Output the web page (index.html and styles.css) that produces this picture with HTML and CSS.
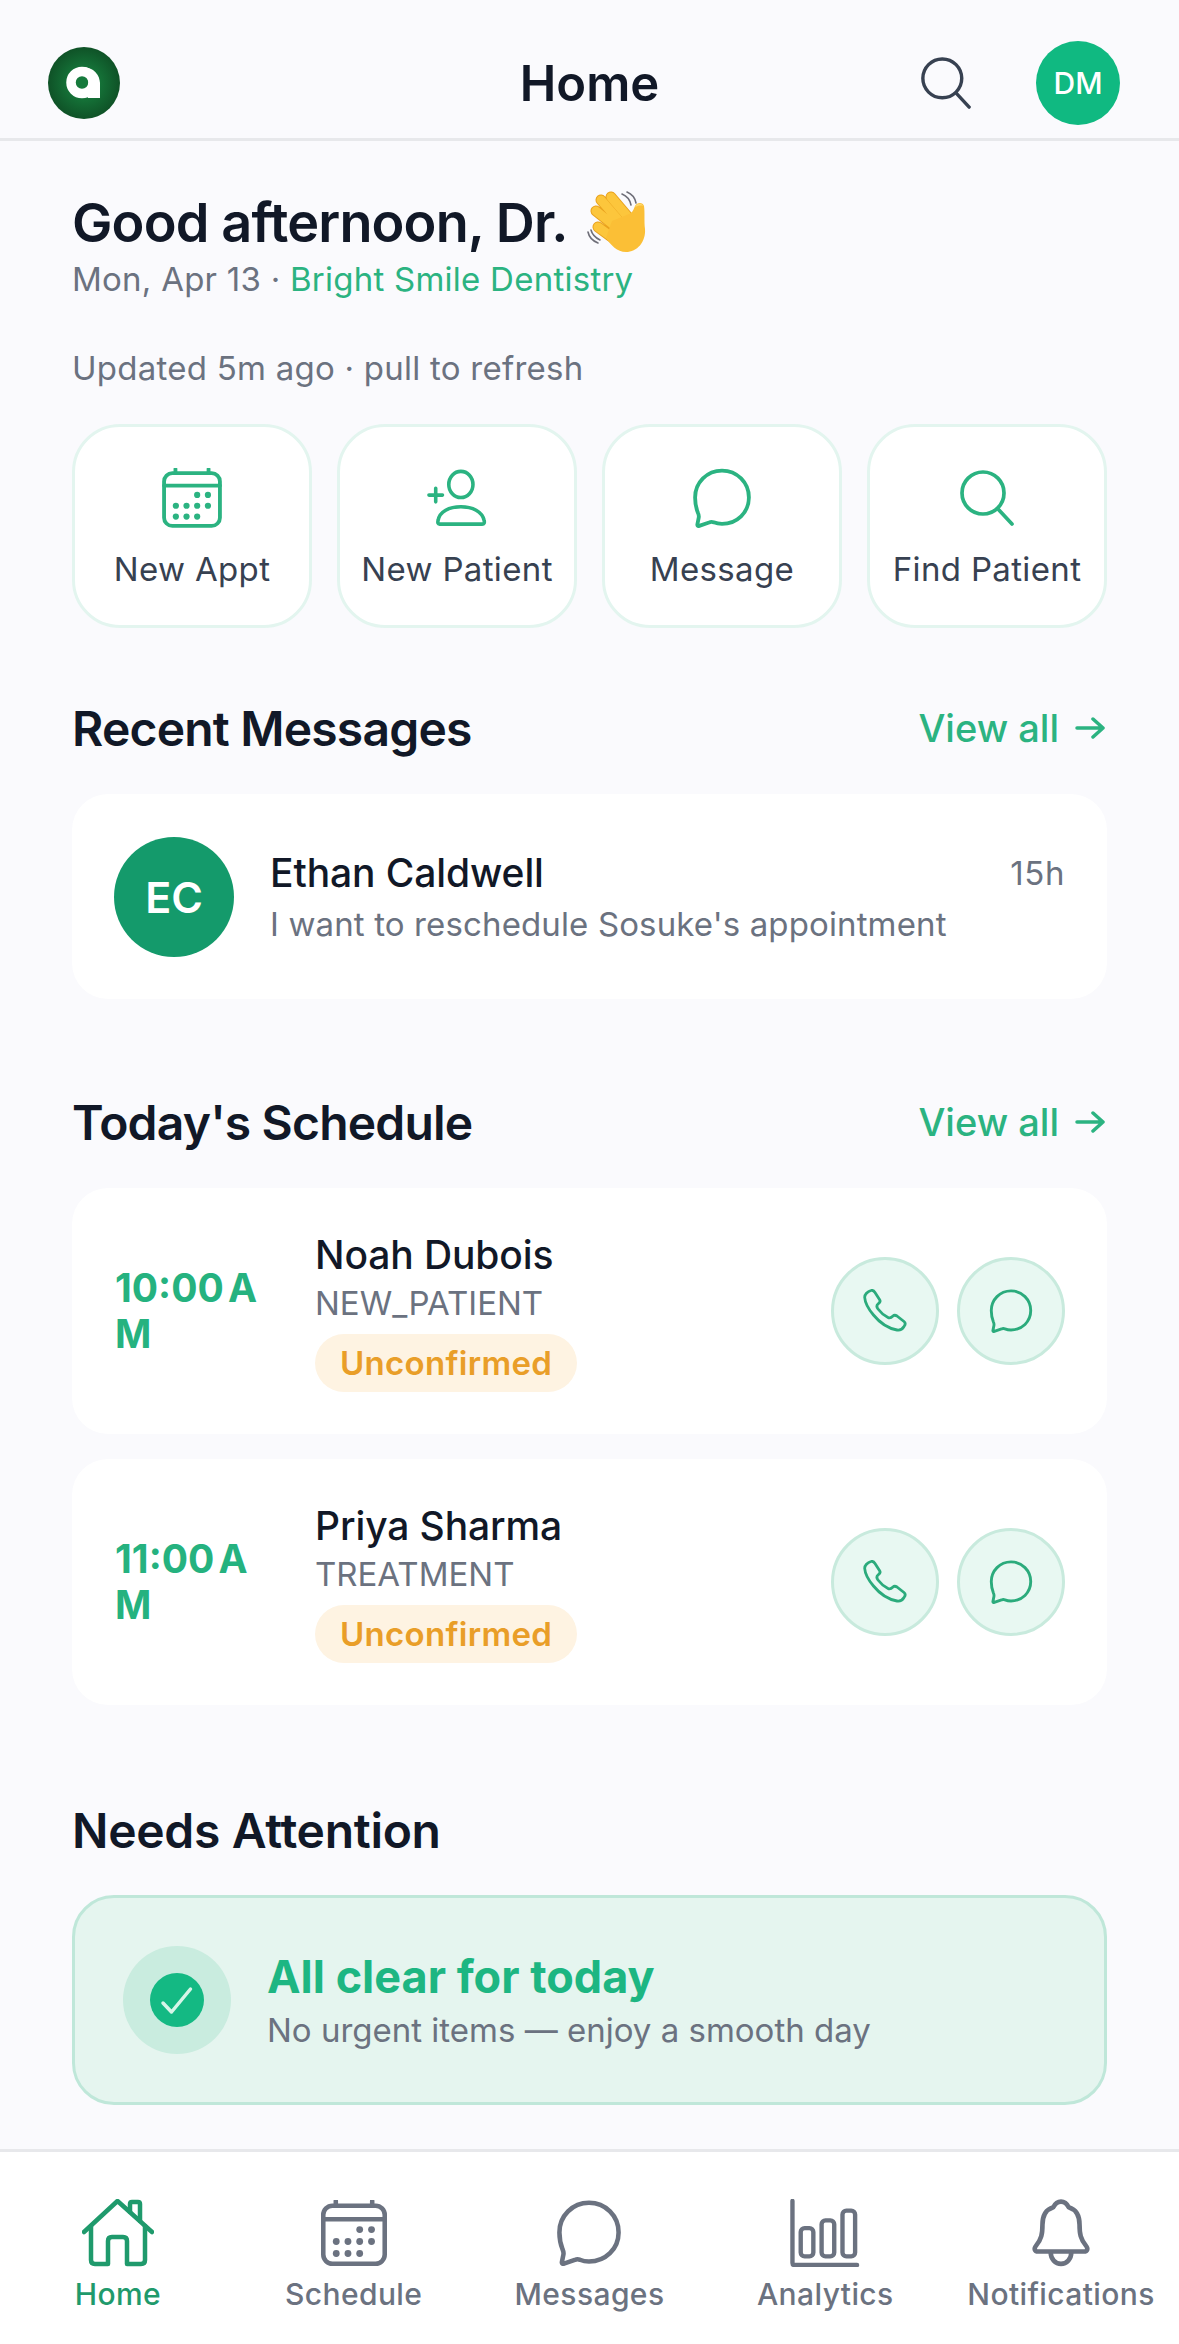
FILE: index.html
```html
<!DOCTYPE html>
<html lang="en">
<head>
    <meta charset="UTF-8">
    <meta name="viewport" content="width=device-width, initial-scale=1.0">
    <title>Home</title>
    <link rel="stylesheet" href="styles.css">
</head>
<body>
    <svg class="icon-defs" aria-hidden="true">
        <symbol id="i-calendar" viewBox="0 0 58 58">
            <rect x="2" y="5" width="54" height="51" rx="8"/>
            <path d="M2 17H56M13 1V5M45 1V5"/>
            <g class="dots">
                <circle cx="34" cy="26" r="3"/><circle cx="44.4" cy="26" r="3"/>
                <circle cx="13.4" cy="36.5" r="3"/><circle cx="23.7" cy="36.5" r="3"/><circle cx="34" cy="36.5" r="3"/><circle cx="44.4" cy="36.5" r="3"/>
                <circle cx="13.4" cy="47" r="3"/><circle cx="23.7" cy="47" r="3"/><circle cx="34" cy="47" r="3"/>
            </g>
        </symbol>
        <symbol id="i-chat" viewBox="0 0 58 58">
            <path d="M29 2.500C43.500 2.500 55 14 55 28.500S43.500 54 29 54C26 54 23.500 53.500 21 52.500C19.500 52 18 52 16.500 52.700L7 56C5.500 56.500 5 55.500 5.200 54.500L6.500 48C6.800 46.500 6.500 45 5.800 43.500C4 39 3 34 3 28.500C3 14 14.500 2.500 29 2.500Z"/>
        </symbol>
        <symbol id="i-search" viewBox="0 0 54 56">
            <circle cx="23" cy="23" r="21"/>
            <path d="M38 39L52 54"/>
        </symbol>
        <symbol id="i-phone" viewBox="0 0 44 44">
            <path d="M8 1.500C9.500 1 11 2 12 3.500L16.500 10.500C17.500 12 17 13.500 15.500 14.500C13.500 16 13.500 18 15 20C18 24 21 26.500 25 28.500C27 29.500 28.500 28.500 30 27C31 26 32.500 26 34 27L41 32.500C42.500 33.700 42.500 35.500 41 37.500C39.500 40 37 41.500 34 41C26 39.500 17 34 10.500 26C5 19.500 2 13 1.700 8.500C1.500 5.500 4.500 2.500 8 1.500Z"/>
        </symbol>
        <symbol id="i-arrow" viewBox="0 0 30 24">
            <path d="M2 12H28M18 3L28 12L18 21"/>
        </symbol>
    </svg>

    <div class="app">
        <header class="topbar">
            <svg class="logo" viewBox="0 0 72 72" aria-label="Logo">
                <defs>
                    <radialGradient id="logoFill">
                        <stop offset="0.3" stop-color="#167a3c"/>
                        <stop offset="1" stop-color="#0f5227"/>
                    </radialGradient>
                </defs>
                <circle cx="36" cy="36" r="36" fill="url(#logoFill)"/>
                <circle cx="34" cy="35.500" r="11" fill="none" stroke="#fff" stroke-width="9.500"/>
                <path d="M40 35.500H52V51H40Z" fill="#fff"/>
                <path d="M34 20C46 20 52 28 52 37H42Z" fill="#fff"/>
            </svg>
            <h1 class="page-title">Home</h1>
            <svg class="icon topbar-search"><use href="#i-search"/></svg>
            <div class="user-badge">DM</div>
        </header>

        <main class="content">
            <div class="greeting">
                <span>Good afternoon, Dr.</span>
                <svg class="wave" viewBox="0 0 62 62" role="img" aria-label="waving hand">
                    <g fill="none" stroke="#6e6e78" stroke-width="1.600" stroke-linecap="round">
                        <path d="M35 3C40 5 43 9 44 14M40 1C45 3 48 7 49 12"/>
                        <path d="M1 41C2 46 6 50 11 52M4 39C5 43 9 47 13 49"/>
                    </g>
                    <g fill="none" stroke-linecap="round">
                        <g stroke="#e9a21e" stroke-width="11">
                            <path d="M24 6L41 26M14 9L33 31M9 20L29 36M11 36L26 47"/>
                        </g>
                        <g stroke="#fcc63c" stroke-width="9">
                            <path d="M24 6L41 26M14 9L33 31M9 20L29 36M11 36L26 47"/>
                        </g>
                    </g>
                    <path d="M25 30L42 23C45 22 46 20 48 15C50 11 56 11 57 15C58 21 57 30 58 38C59 51 50 61 39 61C30 61 24 54 19 47Z" fill="#fbbf36"/>
                    <path d="M48 16C50 12 55 12 56 15C53 14 51 15 48 16Z" fill="#fdd76a"/>
                </svg>
            </div>
            <p class="subtitle">Mon, Apr 13 · <span class="clinic">Bright Smile Dentistry</span></p>
            <p class="updated">Updated 5m ago · pull to refresh</p>

            <div class="quick-actions">
                <div class="quick-card">
                    <svg class="icon quick-icon"><use href="#i-calendar"/></svg>
                    <span>New Appt</span>
                </div>
                <div class="quick-card">
                    <svg class="icon quick-icon" viewBox="0 0 62 58">
                        <ellipse cx="35" cy="15" rx="12.500" ry="13.500"/>
                        <path d="M11.500 52C13 43 23 38 35 38C47 38 57 43 59 52Q60 56 57 56H13Q10.500 56 11.500 52Z"/>
                        <path d="M2 26H16M9 19V33"/>
                    </svg>
                    <span>New Patient</span>
                </div>
                <div class="quick-card">
                    <svg class="icon quick-icon"><use href="#i-chat"/></svg>
                    <span>Message</span>
                </div>
                <div class="quick-card">
                    <svg class="icon quick-icon find-icon"><use href="#i-search"/></svg>
                    <span>Find Patient</span>
                </div>
            </div>

            <div class="section-head recent">
                <h2>Recent Messages</h2>
                <a class="view-all">View all <svg class="icon arrow"><use href="#i-arrow"/></svg></a>
            </div>
            <div class="card message-card">
                <div class="avatar">EC</div>
                <div class="message-body">
                    <div class="message-top">
                        <span class="person-name">Ethan Caldwell</span>
                        <span class="message-time">15h</span>
                    </div>
                    <div class="message-text">I want to reschedule Sosuke's appointment</div>
                </div>
            </div>

            <div class="section-head today">
                <h2>Today's Schedule</h2>
                <a class="view-all">View all <svg class="icon arrow"><use href="#i-arrow"/></svg></a>
            </div>
            <div class="schedule">
                <div class="card appt-card">
                    <div class="appt-time">10:00 AM</div>
                    <div class="appt-info">
                        <div class="person-name">Noah Dubois</div>
                        <div class="appt-type">NEW_PATIENT</div>
                        <span class="status">Unconfirmed</span>
                    </div>
                    <button class="round-btn"><svg class="icon phone-icon"><use href="#i-phone"/></svg></button>
                    <button class="round-btn"><svg class="icon"><use href="#i-chat"/></svg></button>
                </div>
                <div class="card appt-card">
                    <div class="appt-time">11:00 AM</div>
                    <div class="appt-info">
                        <div class="person-name">Priya Sharma</div>
                        <div class="appt-type">TREATMENT</div>
                        <span class="status">Unconfirmed</span>
                    </div>
                    <button class="round-btn"><svg class="icon phone-icon"><use href="#i-phone"/></svg></button>
                    <button class="round-btn"><svg class="icon"><use href="#i-chat"/></svg></button>
                </div>
            </div>

            <div class="section-head attention">
                <h2>Needs Attention</h2>
            </div>
            <div class="clear-banner">
                <div class="check-ring">
                    <svg class="check" viewBox="0 0 54 54">
                        <circle cx="27" cy="27" r="27" fill="#14b983"/>
                        <path d="M13 30L21.500 39L40.500 16" fill="none" stroke="#d6f5e8" stroke-width="3.500" stroke-linecap="round" stroke-linejoin="round"/>
                    </svg>
                </div>
                <div>
                    <div class="clear-title">All clear for today</div>
                    <div class="clear-text">No urgent items — enjoy a smooth day</div>
                </div>
            </div>
        </main>

        <nav class="tabbar">
            <div class="tab active">
                <svg class="icon tab-icon" viewBox="0 0 72 68">
                    <path d="M2 33L35.500 2L70 33"/>
                    <path d="M9 27V61Q9 65 13 65H26V42Q26 38 30 38H41Q45 38 45 42V65H59Q63 65 63 61V27"/>
                    <path d="M48 13V5Q48 3 50 3H56Q58 3 58 5V22"/>
                </svg>
                <span>Home</span>
            </div>
            <div class="tab">
                <svg class="icon tab-icon tab-symbol"><use href="#i-calendar"/></svg>
                <span>Schedule</span>
            </div>
            <div class="tab">
                <svg class="icon tab-icon tab-symbol"><use href="#i-chat"/></svg>
                <span>Messages</span>
            </div>
            <div class="tab">
                <svg class="icon tab-icon" viewBox="0 0 72 70">
                    <path d="M2.500 2V66Q2.500 68 4.500 68H69"/>
                    <rect x="11" y="30" width="13" height="29" rx="4"/>
                    <rect x="32.500" y="22" width="13" height="37" rx="4"/>
                    <rect x="54" y="12" width="13" height="47" rx="4"/>
                </svg>
                <span>Analytics</span>
            </div>
            <div class="tab">
                <svg class="icon tab-icon" viewBox="0 0 58 66">
                    <path d="M29 2.500C33 2.500 35 5 36.500 8C43 10 47 16 47 25C47 34 48 39 53 45C55.500 48 55 51 51 51H7C3 51 2.500 48 5 45C10 39 11 34 11 25C11 16 15 10 21.500 8C23 5 25 2.500 29 2.500Z"/>
                    <path d="M19 52A10 11 0 0 0 39 52"/>
                </svg>
                <span>Notifications</span>
            </div>
        </nav>
    </div>
</body>
</html>
```

FILE: styles.css
```css
* {
    box-sizing: border-box;
}
body {
    margin: 0;
    font-family: Inter, "Noto Sans", sans-serif;
    background: #fafafd;
    color: #111827;
}
h1, h2, p {
    margin: 0;
}
.icon-defs {
    display: none;
}
.icon {
    fill: none;
    stroke: currentColor;
    stroke-width: 3.7;
    stroke-linecap: round;
    stroke-linejoin: round;
}
.dots {
    fill: currentColor;
    stroke: none;
}
.app {
    width: 1179px;
    height: 2344px;
    display: flex;
    flex-direction: column;
    overflow: hidden;
}

/* top bar */
.topbar {
    height: 141px;
    flex: none;
    display: flex;
    align-items: center;
    padding: 28px 59px 0 48px;
    border-bottom: 3px solid #e7e8eb;
    position: relative;
}
.logo {
    width: 72px;
    height: 72px;
}
.page-title {
    position: absolute;
    left: 0;
    right: 0;
    text-align: center;
    font-size: 49px;
    font-weight: 600;
}
.topbar-search {
    width: 50px;
    height: 52px;
    margin-left: auto;
    margin-right: 65px;
    color: #374151;
}
.user-badge {
    width: 84px;
    height: 84px;
    border-radius: 50%;
    background: #10b981;
    color: #fff;
    font-size: 30px;
    font-weight: 500;
    display: flex;
    align-items: center;
    justify-content: center;
}

/* greeting */
.content {
    flex: 1;
    padding: 0 72px;
    overflow: hidden;
}
.greeting {
    display: flex;
    align-items: center;
    gap: 19px;
    font-size: 54px;
    font-weight: 600;
    letter-spacing: -0.85px;
    height: 64px;
    margin-top: 49px;
}
.wave {
    width: 62px;
    height: 62px;
}
.subtitle,
.updated {
    font-size: 33px;
    line-height: 40px;
    color: #6b7280;
    letter-spacing: 0.25px;
}
.subtitle {
    margin-top: 5px;
}
.clinic {
    color: #2bb381;
}
.updated {
    margin-top: 49px;
}

/* quick actions */
.quick-actions {
    display: grid;
    grid-template-columns: repeat(4, 1fr);
    gap: 25px;
    margin-top: 36px;
}
.quick-card {
    height: 204px;
    background: #fff;
    border: 3px solid #e3f5ef;
    border-radius: 48px;
    padding-top: 41px;
    display: flex;
    flex-direction: column;
    align-items: center;
    font-size: 33px;
    font-weight: 430;
    letter-spacing: 0.35px;
    color: #374151;
}
.quick-icon {
    width: 60px;
    height: 60px;
    color: #2bb381;
    margin-bottom: 21px;
}
.quick-icon.find-icon {
    width: 54px;
    height: 56px;
    margin-top: 2px;
    margin-bottom: 23px;
}

/* sections */
.section-head {
    display: flex;
    justify-content: space-between;
    align-items: center;
    height: 60px;
}
.section-head.recent {
    margin-top: 70px;
    margin-bottom: 36px;
}
.section-head.today {
    margin-top: 93px;
    margin-bottom: 36px;
}
.section-head.attention {
    margin-top: 95px;
    margin-bottom: 35px;
}
.section-head h2 {
    font-size: 48px;
    font-weight: 600;
    letter-spacing: -0.8px;
}
.section-head.attention h2 {
    letter-spacing: -0.3px;
}
.view-all {
    display: flex;
    align-items: center;
    gap: 16px;
    margin-right: 2px;
    font-size: 38px;
    font-weight: 500;
    color: #2bb381;
}
.arrow {
    width: 30px;
    height: 24px;
    stroke-width: 3.5;
}
.card {
    background: #fff;
    border-radius: 36px;
}

/* recent message */
.message-card {
    display: flex;
    align-items: center;
    gap: 36px;
    padding: 42px;
    height: 205px;
}
.avatar {
    width: 120px;
    height: 120px;
    flex: none;
    border-radius: 50%;
    background: #149a6b;
    color: #fff;
    font-size: 43px;
    font-weight: 600;
    display: flex;
    align-items: center;
    justify-content: center;
}
.message-body {
    flex: 1;
}
.message-top {
    display: flex;
    justify-content: space-between;
    align-items: center;
}
.person-name {
    font-size: 39px;
    line-height: 48px;
    font-weight: 450;
    letter-spacing: -0.1px;
}
.message-time {
    font-size: 33px;
    letter-spacing: 0.6px;
    color: #6b7280;
}
.message-text {
    font-size: 33px;
    line-height: 42px;
    letter-spacing: 0.13px;
    color: #6b7280;
    margin-top: 6px;
}

/* schedule */
.schedule {
    display: flex;
    flex-direction: column;
    gap: 25px;
}
.appt-card {
    height: 246px;
    display: flex;
    align-items: center;
    padding: 0 42px 0 43px;
}
.appt-time {
    width: 165px;
    flex: none;
    font-size: 39px;
    line-height: 46px;
    font-weight: 700;
    word-spacing: -5px;
    color: #25b27f;
    word-break: break-all;
    margin-right: 35px;
}
.appt-info {
    flex: 1;
}
.appt-type {
    font-size: 33px;
    line-height: 42px;
    color: #6b7280;
    margin-top: 3px;
}
.status {
    display: inline-block;
    height: 58px;
    line-height: 58px;
    padding: 0 25px;
    margin-top: 10px;
    border-radius: 29px;
    background: #fef3e2;
    color: #e99e28;
    font-size: 33px;
    font-weight: 600;
    letter-spacing: 0.3px;
}
.round-btn {
    width: 108px;
    height: 108px;
    flex: none;
    padding: 0;
    margin-left: 18px;
    border: 3px solid #c8eadd;
    border-radius: 50%;
    background: #e8f8f2;
    color: #2bab7c;
    display: flex;
    align-items: center;
    justify-content: center;
}
.round-btn svg {
    width: 44px;
    height: 44px;
    stroke-width: 3.8;
}
.round-btn svg.phone-icon {
    stroke-width: 2.8;
}

/* all clear banner */
.clear-banner {
    height: 210px;
    display: flex;
    align-items: center;
    gap: 36px;
    padding-left: 48px;
    background: #e5f5ef;
    border: 3px solid #bfe7d9;
    border-radius: 42px;
}
.check-ring {
    width: 108px;
    height: 108px;
    border-radius: 50%;
    background: #c9ecdf;
    display: flex;
    align-items: center;
    justify-content: center;
}
.check {
    width: 54px;
    height: 54px;
}
.clear-title {
    font-size: 45px;
    line-height: 54px;
    font-weight: 700;
    color: #1db682;
}
.clear-text {
    font-size: 33px;
    line-height: 42px;
    color: #6b7280;
    margin-top: 5px;
}

/* bottom tabs */
.tabbar {
    height: 195px;
    flex: none;
    display: grid;
    grid-template-columns: repeat(5, 1fr);
    background: #fff;
    border-top: 3px solid #e7e8eb;
    padding-top: 47px;
}
.tab {
    display: flex;
    flex-direction: column;
    align-items: center;
    font-size: 30px;
    font-weight: 450;
    letter-spacing: 0.4px;
    line-height: 36px;
    color: #6b7280;
}
.tab.active {
    color: #1f9a6c;
}
.tab-icon {
    width: 72px;
    height: 68px;
    stroke-width: 4.5;
    margin-bottom: 9px;
}
.tab-icon.tab-symbol {
    width: 66px;
    height: 66px;
    stroke-width: 4;
    margin-top: 1px;
    margin-bottom: 10px;
}
```
